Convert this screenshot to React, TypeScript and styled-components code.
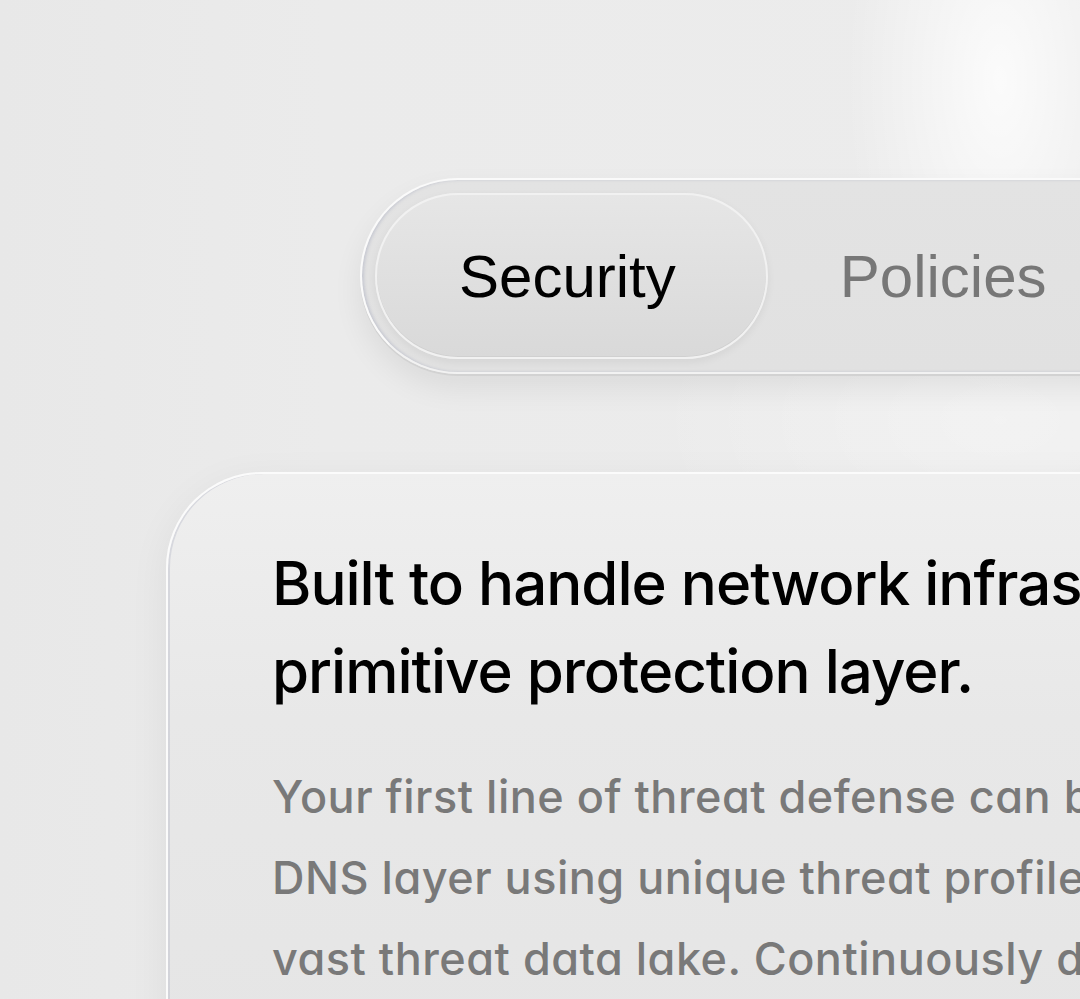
import React from "react";
import styled, { createGlobalStyle } from "styled-components";

const Global = createGlobalStyle`
  html, body { margin: 0; padding: 0; }
  body {
    width: 1080px;
    height: 999px;
    overflow: hidden;
    background: #ebebeb;
  }
`;

const Page = styled.div`
  position: relative;
  width: 1080px;
  height: 999px;
  overflow: hidden;
  box-sizing: border-box;
  padding: 178px 0 0 166px;
  display: flex;
  flex-direction: column;
  align-items: flex-start;
  background:
    radial-gradient(ellipse 220px 460px at 1000px 80px, rgba(255,255,255,0.8), rgba(255,255,255,0) 70%),
    radial-gradient(ellipse 500px 300px at 1000px 420px, rgba(255,255,255,0.35), rgba(255,255,255,0) 70%),
    linear-gradient(90deg, #e8e8e8 0%, #ebebeb 30%, #ececec 100%);
`;

const TabBar = styled.div`
  flex-shrink: 0;
  margin-left: 194px;
  display: flex;
  align-items: center;
  box-sizing: border-box;
  height: 196px;
  padding: 0 13px;
  border-radius: 98px;
  border: 2px solid #fafafa;
  border-bottom-color: #f2f2f2;
  background: linear-gradient(180deg, #e3e3e3 0%, #e1e1e1 100%);
  box-shadow:
    0 2px 0 #d2d2d2,
    inset 2px 0 3px rgba(150, 155, 180, 0.35),
    0 14px 30px rgba(0, 0, 0, 0.07);
  white-space: nowrap;
`;

const Tab = styled.div<{ $active?: boolean }>`
  flex-shrink: 0;
  box-sizing: border-box;
  height: 166px;
  display: flex;
  align-items: center;
  justify-content: center;
  padding: ${(p) => (p.$active ? "0 90px 0 82px" : "0 72px")};
  border-radius: 83px;
  font-family: "Liberation Sans", Arial, sans-serif;
  font-size: 60px;
  color: ${(p) => (p.$active ? "#000" : "#777")};
  ${(p) =>
    p.$active
      ? `
    background: linear-gradient(180deg, #e6e6e6 0%, #d9d9d9 100%);
    border: 2px solid #f1f1f1;
    box-shadow: 0 3px 8px rgba(0,0,0,0.06), inset 0 -1px 0 #d0d0d0;
  `
      : ""}
`;

const Card = styled.div`
  flex-shrink: 0;
  margin-top: 98px;
  width: 1400px;
  box-sizing: border-box;
  padding: 65px 0 0 104px;
  height: 700px;
  border-radius: 96px 96px 0 0;
  border: 2px solid #fbfbfb;
  border-bottom: none;
  background: linear-gradient(180deg, #efefef 0%, #e8e8e8 35%, #e4e4e4 100%);
  box-shadow:
    inset 2px 0 0 rgba(175, 178, 195, 0.35),
    0 10px 40px rgba(0, 0, 0, 0.06);
`;

const Heading = styled.h2`
  margin: 0;
  font-family: Inter, "Noto Sans", sans-serif;
  font-weight: 500;
  font-size: 60px;
  line-height: 88px;
  letter-spacing: -1px;
  color: #000;
  white-space: nowrap;
`;

const Body = styled.p`
  margin: 41px 0 0;
  font-family: Inter, "Noto Sans", sans-serif;
  font-feature-settings: "cv11" 1;
  font-weight: 500;
  font-size: 45px;
  line-height: 81px;
  letter-spacing: 0.5px;
  color: #797979;
  white-space: nowrap;
`;

export default function App() {
  return (
    <>
      <Global />
      <Page>
        <TabBar>
          <Tab $active>Security</Tab>
          <Tab>Policies</Tab>
          <Tab>Insights</Tab>
        </TabBar>
        <Card>
          <Heading>
            Built to handle network infrastructure, not just a
            <br />
            primitive protection layer.
          </Heading>
          <Body>
            Your first line of threat defense can be deployed at the
            <br />
            DNS layer using unique threat profiles built from our
            <br />
            vast threat data lake. Continuously detect and block
            <br />
            malicious domains before they ever reach your network.
          </Body>
        </Card>
      </Page>
    </>
  );
}
